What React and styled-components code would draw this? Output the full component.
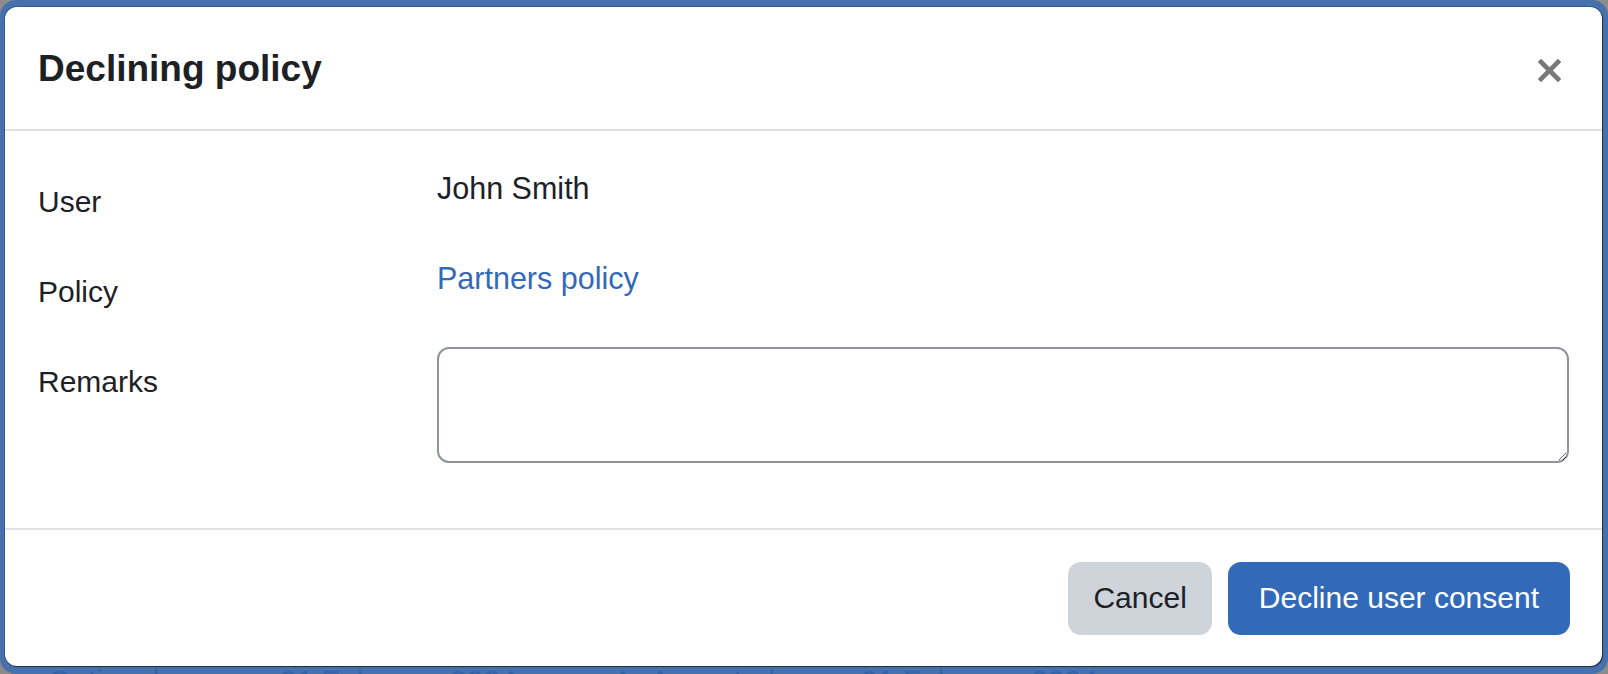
import React from "react";
import styled, { createGlobalStyle } from "styled-components";

const GlobalStyle = createGlobalStyle`
  html, body {
    margin: 0;
    padding: 0;
    background: #8b8b8b;
  }
  body {
    font-family: "Liberation Sans", Arial, Helvetica, sans-serif;
    color: #1d2125;
  }
  * {
    box-sizing: border-box;
  }
`;

// the page table behind the dialog, only its top edge peeks out
const backdropRow = [
  { text: "Optional", width: 232 },
  { text: "01 February 2024", width: 332 },
  { text: "4", width: 38 },
  { text: "Accepted", width: 211 },
  { text: "01 February 2024" },
];

function DeclinePolicyModal() {
  return (
    <Frame>
      <Modal>
        <Header>
          <Title>Declining policy</Title>
          <CloseButton aria-label="Close">
            <svg width="23" height="23" viewBox="0 0 23 23">
              <path
                d="M3 3 L20 20 M20 3 L3 20"
                stroke="#787878"
                strokeWidth="4.6"
                strokeLinecap="square"
                fill="none"
              />
            </svg>
          </CloseButton>
        </Header>
        <Body>
          <FormRow>
            <Label>User</Label>
            <Value>John Smith</Value>
          </FormRow>
          <FormRow>
            <Label>Policy</Label>
            <Value>
              <Link href="#">Partners policy</Link>
            </Value>
          </FormRow>
          <FormRow $last>
            <Label htmlFor="remarks">Remarks</Label>
            <Remarks id="remarks" />
          </FormRow>
        </Body>
        <Footer>
          <Button $variant="secondary">Cancel</Button>
          <Button $variant="primary">Decline user consent</Button>
        </Footer>
      </Modal>
      <PageRow>
        {backdropRow.map((cell, i) => (
          <PageCell key={i} $width={cell.width}>
            {cell.text}
          </PageCell>
        ))}
      </PageRow>
    </Frame>
  );
}

export default function App() {
  return (
    <>
      <GlobalStyle />
      <DeclinePolicyModal />
    </>
  );
}

const Frame = styled.div`
  width: 1608px;
  height: 674px;
  background: #4671ad;
  border-radius: 16px;
  overflow: hidden;
  display: flex;
  flex-direction: column;
  padding: 7px 6px 0 5px;
`;

const Modal = styled.div`
  height: 659px;
  flex-shrink: 0;
  background: #fff;
  border-radius: 12px;
  box-shadow: 0 0 0 1px rgba(30, 40, 60, 0.35), 1px 1px 1px rgba(0, 0, 0, 0.55);
  display: flex;
  flex-direction: column;
`;

const Header = styled.div`
  height: 124px;
  flex-shrink: 0;
  display: flex;
  align-items: center;
  justify-content: space-between;
  padding: 3px 41px 0 33px;
  border-bottom: 2px solid #dee2e6;
`;

const Title = styled.h5`
  margin: 0;
  font-size: 37px;
  font-weight: 700;
  line-height: 1.2;
  color: #1d2125;
`;

const CloseButton = styled.button`
  border: none;
  background: none;
  padding: 0;
  width: 23px;
  height: 23px;
  display: flex;
  cursor: pointer;
  margin-top: 1px;
`;

const Body = styled.div`
  flex: 1;
  padding: 34px 33px 0 33px;
`;

const FormRow = styled.div`
  display: grid;
  grid-template-columns: 399px 1fr;
  margin-bottom: ${(p) => (p.$last ? "0" : "30px")};
`;

const Label = styled.label`
  font-size: 30px;
  line-height: 46px;
  padding-top: 14px;
  color: #1d2125;
`;

const Value = styled.div`
  font-size: 30.5px;
  line-height: 46px;
  color: #1d2125;
`;

const Link = styled.a`
  color: #326ab9;
  text-decoration: none;
`;

const Remarks = styled.textarea`
  margin-top: 2px;
  height: 116px;
  width: 100%;
  border: 2px solid #8f949c;
  border-radius: 12px;
  font-family: inherit;
  font-size: 30px;
  padding: 10px 20px;
  outline: none;
  background: #fff;
`;

const Footer = styled.div`
  height: 138px;
  flex-shrink: 0;
  border-top: 2px solid #dee2e6;
  display: flex;
  align-items: center;
  justify-content: flex-end;
  gap: 16px;
  padding: 0 32px 0 0;
`;

const Button = styled.button`
  height: 73px;
  padding: ${(p) => (p.$variant === "primary" ? "0 31px" : "0 25px")};
  border: none;
  border-radius: 13px;
  font-family: inherit;
  font-size: 30px;
  cursor: pointer;
  background: ${(p) => (p.$variant === "primary" ? "#326ab9" : "#ced4da")};
  color: ${(p) => (p.$variant === "primary" ? "#fff" : "#1d2125")};
`;

const PageRow = styled.div`
  display: flex;
  padding-left: 43px;
  color: #3462a6;
  font-size: 30px;
  line-height: 30px;
  white-space: nowrap;
`;

const PageCell = styled.div`
  flex: ${(p) => (p.$width ? `0 0 ${p.$width}px` : "1")};
`;
